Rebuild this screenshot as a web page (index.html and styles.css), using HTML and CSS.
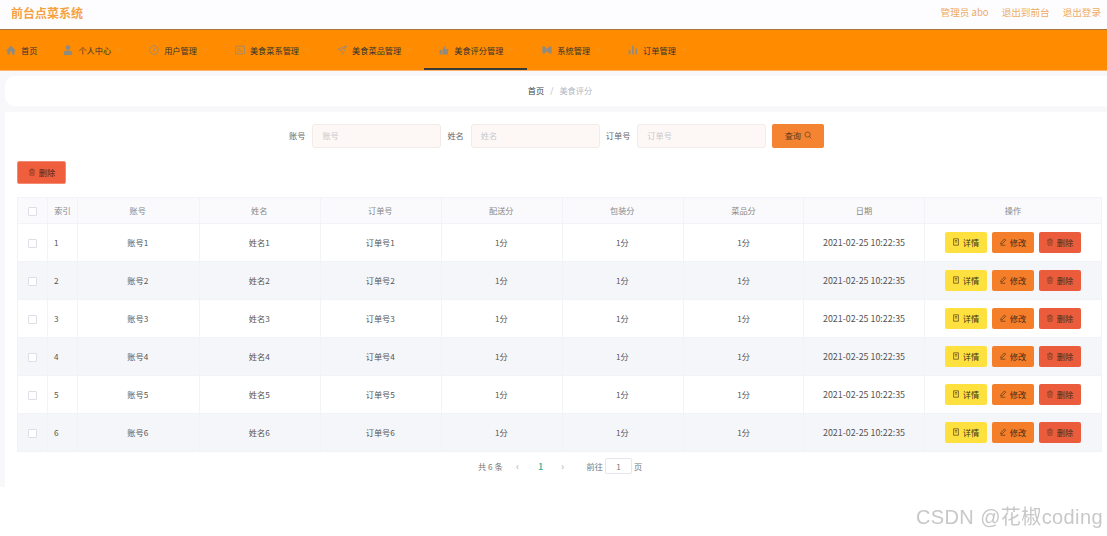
FILE: index.html
```html
<!DOCTYPE html>
<html lang="zh">
<head>
<meta charset="utf-8">
<title>前台点菜系统</title>
<link rel="stylesheet" href="styles.css">
</head>
<body>
<svg class="defs" width="0" height="0" aria-hidden="true">
  <symbol id="i-doc" viewBox="0 0 10 10"><path d="M2 1h6v8H2zM3.6 3.2h2.800M3.600 5h2.800" fill="none" stroke="currentColor" stroke-width=".8"/></symbol>
  <symbol id="i-edit" viewBox="0 0 10 10"><path d="M6.800 1.200 8.400 2.800 4 7.200 2.200 7.600 2.600 5.600zM2 9h6" fill="none" stroke="currentColor" stroke-width=".8"/></symbol>
  <symbol id="i-del" viewBox="0 0 10 10"><path d="M1.500 2.600h7M4 2.400V1.200h2v1.200M2.500 2.600V9h5V2.600M4.200 4.400v2.800M5.800 4.400v2.800" fill="none" stroke="currentColor" stroke-width=".6"/></symbol>
  <symbol id="i-arrow" viewBox="0 0 8 6"><path d="M1 1.500 4 4.500 7 1.500" fill="none" stroke="currentColor" stroke-width=".8"/></symbol>
</svg>
<header class="topbar">
  <div class="brand">前台点菜系统</div>
  <div class="top-links"><span>管理员 abo</span><span>退出到前台</span><span>退出登录</span></div>
</header>
<nav class="menu">
  <div class="menu-item home"><svg class="mi" viewBox="0 0 10 10"><path d="M5 .8 0 5.400l.7.7L1.400 5.500V9.500h2.600V6.500h2V9.500h2.600V5.500l.7.6.7-.7z" fill="currentColor"/></svg><span>首页</span></div>
  <div class="menu-item"><svg class="mi" viewBox="0 0 10 10"><circle cx="5" cy="2.600" r="2.400" fill="currentColor"/><path d="M.8 10V8a3 2.600 0 0 1 3-2.400h2.400a3 2.600 0 0 1 3 2.400v2z" fill="currentColor"/></svg><span>个人中心</span><svg class="arrow"><use href="#i-arrow"/></svg></div>
  <div class="menu-item"><svg class="mi" viewBox="0 0 10 10"><circle cx="5" cy="5" r="4.300" fill="none" stroke="currentColor" stroke-width=".8"/><path d="M6.200 2.800 5.400 5.600 4 7" fill="none" stroke="currentColor" stroke-width=".9"/></svg><span>用户管理</span><svg class="arrow"><use href="#i-arrow"/></svg></div>
  <div class="menu-item"><svg class="mi" viewBox="0 0 10 10"><path d="M.6 1.200h8.800v7.600H.6zM2.400 4h3.200M2.400 6.200h5" fill="none" stroke="currentColor" stroke-width=".8"/></svg><span>美食菜系管理</span><svg class="arrow"><use href="#i-arrow"/></svg></div>
  <div class="menu-item"><svg class="mi" viewBox="0 0 10 10"><path d="M9.500.8 .8 4.300l3.400 1.300L5.600 9.200zM4.200 5.600 9.500.8" fill="none" stroke="currentColor" stroke-width=".8"/></svg><span>美食菜品管理</span><svg class="arrow"><use href="#i-arrow"/></svg></div>
  <div class="menu-item active"><svg class="mi" viewBox="0 0 10 10"><path d="M.5 5h2.200v4.500H.5zM3.400 5 5.400 1.200 6.400 1.800 6 4h3.500l-.8 5.500H3.400z" fill="currentColor"/></svg><span>美食评分管理</span><svg class="arrow"><use href="#i-arrow"/></svg></div>
  <div class="menu-item"><svg class="mi" viewBox="0 0 10 10"><path d="M.3 1.500h2.500L5 4 7.200 1.500h2.500v7H7.200L5 6 2.800 8.500H.3z" fill="currentColor"/></svg><span>系统管理</span><svg class="arrow"><use href="#i-arrow"/></svg></div>
  <div class="menu-item"><svg class="mi" viewBox="0 0 10 10"><path d="M.6 5h1.800v4.500H.6zM4 .8h1.800v8.700H4zM7.400 3.400h1.800v6.100H7.400z" fill="currentColor"/></svg><span>订单管理</span><svg class="arrow"><use href="#i-arrow"/></svg></div>
</nav>
<div class="page">
  <div class="crumb-card"><span class="crumb-home">首页</span><span class="crumb-sep">/</span><span class="crumb-cur">美食评分</span></div>
  <main class="panel">
    <form class="search">
      <label class="field"><span>账号</span><span class="input">账号</span></label>
      <label class="field"><span>姓名</span><span class="input">姓名</span></label>
      <label class="field"><span>订单号</span><span class="input">订单号</span></label>
      <span class="btn btn-query">查询<svg class="btn-ic" viewBox="0 0 10 10"><circle cx="4.500" cy="4.500" r="3.200" fill="none" stroke="currentColor" stroke-width=".8"/><path d="M7 7l2 2" stroke="currentColor" stroke-width=".8"/></svg></span>
    </form>
    <div class="toolbar"><span class="btn btn-del-main"><svg class="btn-ic"><use href="#i-del"/></svg>删除</span></div>
    <table class="grid">
      <colgroup><col class="c-check"><col class="c-idx"><col class="c-acct"><col class="c-w"><col class="c-w"><col class="c-w"><col class="c-w"><col class="c-menu"><col class="c-w"><col class="c-op"></colgroup>
      <thead><tr><th><i class="check"></i></th><th>索引</th><th>账号</th><th>姓名</th><th>订单号</th><th>配送分</th><th>包装分</th><th>菜品分</th><th>日期</th><th>操作</th></tr></thead>
      <tbody>
        <tr><td><i class="check"></i></td><td class="idx">1</td><td>账号1</td><td>姓名1</td><td>订单号1</td><td>1分</td><td>1分</td><td>1分</td><td class="date">2021-02-25 10:22:35</td><td><div class="ops"><span class="op op-y"><svg class="btn-ic"><use href="#i-doc"/></svg>详情</span><span class="op op-o"><svg class="btn-ic"><use href="#i-edit"/></svg>修改</span><span class="op op-r"><svg class="btn-ic"><use href="#i-del"/></svg>删除</span></div></td></tr>
        <tr><td><i class="check"></i></td><td class="idx">2</td><td>账号2</td><td>姓名2</td><td>订单号2</td><td>1分</td><td>1分</td><td>1分</td><td class="date">2021-02-25 10:22:35</td><td><div class="ops"><span class="op op-y"><svg class="btn-ic"><use href="#i-doc"/></svg>详情</span><span class="op op-o"><svg class="btn-ic"><use href="#i-edit"/></svg>修改</span><span class="op op-r"><svg class="btn-ic"><use href="#i-del"/></svg>删除</span></div></td></tr>
        <tr><td><i class="check"></i></td><td class="idx">3</td><td>账号3</td><td>姓名3</td><td>订单号3</td><td>1分</td><td>1分</td><td>1分</td><td class="date">2021-02-25 10:22:35</td><td><div class="ops"><span class="op op-y"><svg class="btn-ic"><use href="#i-doc"/></svg>详情</span><span class="op op-o"><svg class="btn-ic"><use href="#i-edit"/></svg>修改</span><span class="op op-r"><svg class="btn-ic"><use href="#i-del"/></svg>删除</span></div></td></tr>
        <tr><td><i class="check"></i></td><td class="idx">4</td><td>账号4</td><td>姓名4</td><td>订单号4</td><td>1分</td><td>1分</td><td>1分</td><td class="date">2021-02-25 10:22:35</td><td><div class="ops"><span class="op op-y"><svg class="btn-ic"><use href="#i-doc"/></svg>详情</span><span class="op op-o"><svg class="btn-ic"><use href="#i-edit"/></svg>修改</span><span class="op op-r"><svg class="btn-ic"><use href="#i-del"/></svg>删除</span></div></td></tr>
        <tr><td><i class="check"></i></td><td class="idx">5</td><td>账号5</td><td>姓名5</td><td>订单号5</td><td>1分</td><td>1分</td><td>1分</td><td class="date">2021-02-25 10:22:35</td><td><div class="ops"><span class="op op-y"><svg class="btn-ic"><use href="#i-doc"/></svg>详情</span><span class="op op-o"><svg class="btn-ic"><use href="#i-edit"/></svg>修改</span><span class="op op-r"><svg class="btn-ic"><use href="#i-del"/></svg>删除</span></div></td></tr>
        <tr><td><i class="check"></i></td><td class="idx">6</td><td>账号6</td><td>姓名6</td><td>订单号6</td><td>1分</td><td>1分</td><td>1分</td><td class="date">2021-02-25 10:22:35</td><td><div class="ops"><span class="op op-y"><svg class="btn-ic"><use href="#i-doc"/></svg>详情</span><span class="op op-o"><svg class="btn-ic"><use href="#i-edit"/></svg>修改</span><span class="op op-r"><svg class="btn-ic"><use href="#i-del"/></svg>删除</span></div></td></tr>
      </tbody>
    </table>
    <div class="pager"><span class="total">共 6 条</span><span class="pg-arrow">‹</span><span class="pg-num">1</span><span class="pg-arrow">›</span><span class="goto">前往</span><span class="pg-input">1</span><span>页</span></div>
  </main>
</div>
<div class="watermark">CSDN @花椒coding</div>
</body>
</html>
```
FILE: styles.css
```css
* { box-sizing: border-box; }
html, body { margin: 0; padding: 0; }
body {
  position: relative;
  width: 1107px; height: 536px; overflow: hidden; background: #fff;
  font-family: "Noto Sans CJK SC", "Noto Sans", "Liberation Sans", sans-serif;
  font-size: 8.2px; color: #555;
  filter: blur(.35px);
}
.defs { position: absolute; }
.topbar {
  height: 30px; background: #fdfdff; border-bottom: 1px solid #a8763a;
  display: flex; align-items: center; justify-content: space-between;
  padding: 0 6px 5px 11px;
}
.brand { font-size: 12px; font-weight: 700; color: #f5a142; }
.top-links { display: flex; gap: 13px; font-size: 9.6px; color: #eeab62; }
.menu { height: 41px; background: #ff8c00; display: flex; border-bottom: 1px solid #ffb469; color: #333; }
.menu-item { display: flex; align-items: center; padding: 0 12px 1px 15px; height: 40px; }
.menu-item.home { padding: 0 11px 1px 6px; }
.menu-item.active { border-bottom: 2px solid #3b3a3a; padding: 1px 13px 0 15px; }
.mi { width: 10px; height: 10px; margin-right: 5px; color: #8f8b83; }
.arrow { width: 6px; height: 5px; margin-left: 5px; color: #e0a05c; }
.page { background: #f8f8fb; height: 416px; padding-top: 5px; }
.crumb-card {
  margin-left: 5px; height: 30px; padding: 0 0 2px 8px; background: #fff; border-radius: 10px 0 0 10px;
  display: flex; align-items: center; justify-content: center; gap: 5px;
}
.crumb-home { color: #444; }
.crumb-sep { color: #b0b4bc; margin: 0 1px; }
.crumb-cur { color: #b4b8c2; }
.panel { margin: 6px 0 0 5px; height: 375px; background: #fff; padding: 12px 6px 0 12px; }
.search { display: flex; height: 24px; align-items: center; padding-left: 272px; }
.field { display: flex; align-items: center; gap: 7px; margin-right: 6px; color: #666; padding-bottom: 0; }
.field > span:first-child { margin-top: -2px; }
.input {
  width: 129px; height: 24px; background: #fdf8f6; border: 1px solid #f1ecea; border-radius: 3px;
  display: flex; align-items: center; padding: 0 0 2px 9px; color: #c8c8cc;
}
.btn { display: flex; align-items: center; justify-content: center; gap: 3px; border-radius: 2px; padding-bottom: 2px; }
.btn-query { width: 52px; height: 24px; background: #f48432; color: #55391e; }
.btn-ic { width: 8px; height: 8px; flex: none; }
.toolbar { margin-top: 13px; height: 23px; }
.btn-del-main { width: 49px; height: 23px; background: #ef5f3e; color: #4a2418; border: 1px solid #f58a72; }
.grid {
  margin-top: 13px; width: 1084px; table-layout: fixed; border-collapse: collapse;
  border: 1px solid #f2f3f6; text-align: center; color: #555;
}
.c-check { width: 30px; }
.c-idx { width: 30px; }
.c-acct { width: 122px; }
.c-w { width: 121px; }
.c-menu { width: 120px; }
.c-op { width: 177px; }
.grid th { height: 26px; background: #fafafc; font-weight: 400; color: #888; border: 1px solid #f2f3f6; padding: 0 0 2px; }
.grid td { height: 38px; border: 1px solid #f2f3f6; padding: 0 0 2px; }
.grid tr > :nth-child(n+3):nth-child(-n+7) { padding-right: 1.5px; }
.grid .idx { text-align: left; padding-left: 6px; }
.grid td.date { font-size: 8.9px; padding: 0; }
.grid tbody tr:nth-child(even) td { background: #f5f6fa; }
.check { display: inline-block; width: 9px; height: 9px; border: 1px solid #dcdfe6; border-radius: 1px; background: #fff; vertical-align: middle; }
.ops { display: flex; justify-content: center; gap: 5px; padding-right: 1px; margin-bottom: -2px; }
.op { width: 42px; height: 21px; padding-bottom: 1px; border-radius: 2px; display: flex; align-items: center; justify-content: center; gap: 3px; color: #40301a; }
.op-y { background: #fee13e; }
.op-o { background: #f47e2a; }
.op-r { background: #eb5c3c; }
.pager { display: flex; align-items: center; height: 27px; padding-left: 461px; color: #777; }
.total { margin-right: 12px; }
.pg-arrow { width: 6px; text-align: center; font-size: 10px; color: #b0b0b0; }
.pg-num { width: 46px; text-align: center; font-weight: 700; color: #3eb89a; margin: 0 -4px 0 -3px; }
.goto { margin-left: 21px; margin-right: 2px; }
.pg-input { width: 27px; height: 16px; border: 1px solid #e4e7ed; border-radius: 2px; display: flex; align-items: center; justify-content: center; margin-right: 2px; }
.watermark {
  position: absolute; right: 4px; bottom: 6px; white-space: nowrap; letter-spacing: .4px;
  font-size: 20px; color: #c8c8c8; font-family: "Liberation Sans", "Noto Sans CJK SC", sans-serif;
}
```
